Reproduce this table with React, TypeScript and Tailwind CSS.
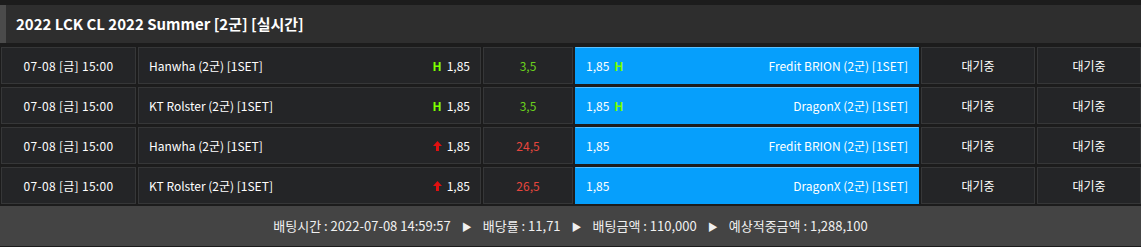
import React from 'react';

type Row = {
  time: string;
  home: string;
  away: string;
  odds: string;
  line: string;
  mark: 'H' | 'up';
};

const rows: Row[] = [
  { time: '07-08 [금] 15:00', home: 'Hanwha (2군) [1SET]', away: 'Fredit BRION (2군) [1SET]', odds: '1,85', line: '3,5', mark: 'H' },
  { time: '07-08 [금] 15:00', home: 'KT Rolster (2군) [1SET]', away: 'DragonX (2군) [1SET]', odds: '1,85', line: '3,5', mark: 'H' },
  { time: '07-08 [금] 15:00', home: 'Hanwha (2군) [1SET]', away: 'Fredit BRION (2군) [1SET]', odds: '1,85', line: '24,5', mark: 'up' },
  { time: '07-08 [금] 15:00', home: 'KT Rolster (2군) [1SET]', away: 'DragonX (2군) [1SET]', odds: '1,85', line: '26,5', mark: 'up' },
];

const UpArrow = () => (
  <svg width="9" height="10" viewBox="0 0 9 10" className="mr-[5px]">
    <path d="M4.5 0 L9 5 L6 5 L6 10 L3 10 L3 5 L0 5 Z" fill="#e01010" />
  </svg>
);

const cell = 'h-[37px] flex items-center bg-[#242527] border border-[#363738]';

const App: React.FC = () => {
  return (
    <div
      className="w-[1141px] h-[247px] bg-[#1c1c1c] pt-[5px] text-white text-[12px]"
      style={{ fontFamily: '"Noto Sans CJK KR", "Noto Sans", sans-serif' }}
    >
      {/* Title */}
      <div className="h-[38px] flex items-center bg-[#2e2e2e]">
        <div className="w-[6px] h-full bg-[#4b4b4b]" />
        <h1 className="ml-[10px] text-[15px] font-bold">2022 LCK CL 2022 Summer [2군] [실시간]</h1>
      </div>

      {/* Rows */}
      <div className="flex flex-col gap-[3px] pt-[4px] pl-[1px]">
        {rows.map((r, i) => (
          <div key={i} className="flex gap-[2px]">
            <div className={`${cell} w-[135px] justify-center tracking-[0.3px]`}>{r.time}</div>
            <div className={`${cell} w-[343px] justify-between pl-[10px] pr-[10px]`}>
              <span>{r.home}</span>
              <span className="flex items-center">
                {r.mark === 'H' ? (
                  <span className="text-[#7dff00] font-bold mr-[5px]">H</span>
                ) : (
                  <UpArrow />
                )}
                {r.odds}
              </span>
            </div>
            <div className={`${cell} w-[90px] justify-center ${r.mark === 'H' ? 'text-[#6ad11c]' : 'text-[#e8453d]'}`}>
              {r.line}
            </div>
            <div className="h-[37px] w-[344px] flex items-center justify-between px-[10px] bg-[#069ffc] border border-[#069ffc] border-t-[#5cc1ff]">
              <span className="flex items-center">
                {r.odds}
                {r.mark === 'H' && <span className="text-[#7dff00] font-bold ml-[5px]">H</span>}
              </span>
              <span>{r.away}</span>
            </div>
            <div className={`${cell} w-[114px] justify-center`}>대기중</div>
            <div className={`${cell} w-[104px] justify-center`}>대기중</div>
          </div>
        ))}
      </div>

      {/* Footer */}
      <div className="mt-[2px] h-[40px] bg-[#444444] flex items-center justify-center gap-[11px] text-[13px] text-[#f0f0f0]">
        <span>배팅시간 : 2022-07-08 14:59:57</span>
        <span className="text-[10px]">▶</span>
        <span>배당률 : 11,71</span>
        <span className="text-[10px]">▶</span>
        <span>배팅금액 : 110,000</span>
        <span className="text-[10px]">▶</span>
        <span>예상적중금액 : 1,288,100</span>
      </div>
    </div>
  );
};

export default App;
